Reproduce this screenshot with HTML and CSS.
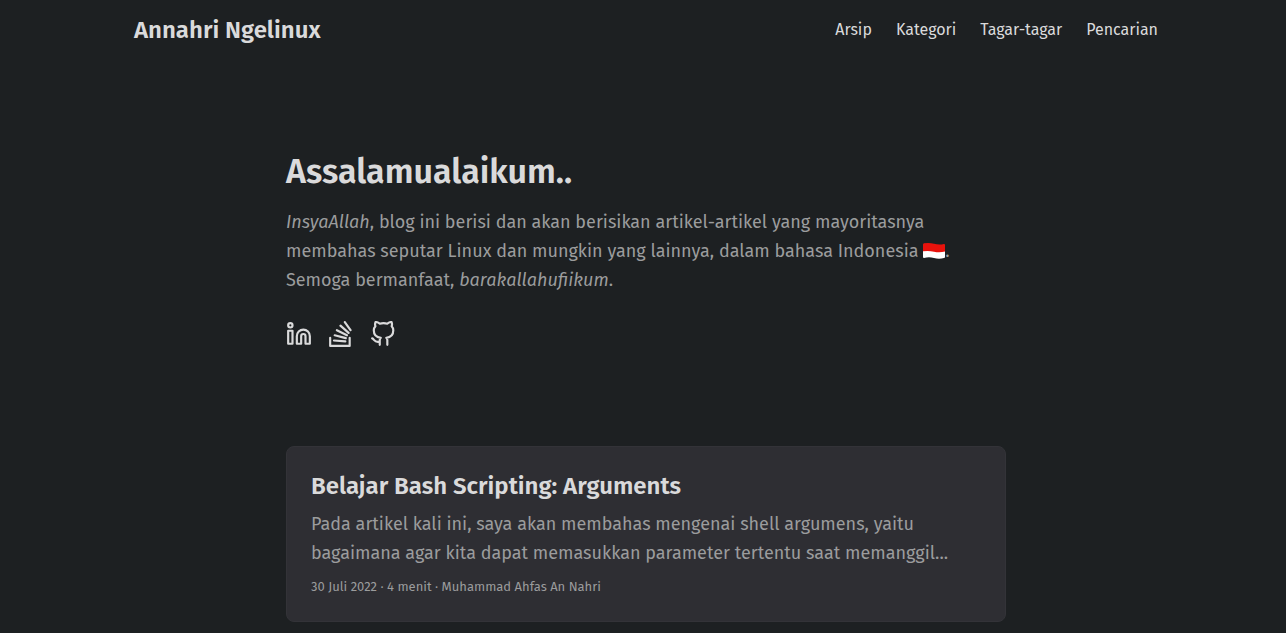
FILE: index.html
```html
<!DOCTYPE html>
<html lang="id">
<head>
<meta charset="utf-8">
<meta name="viewport" content="width=device-width, initial-scale=1">
<title>Annahri Ngelinux</title>
<link rel="stylesheet" href="styles.css">
</head>
<body>
<header class="header">
  <nav class="nav">
    <a class="logo" href="#">Annahri Ngelinux</a>
    <ul class="menu">
      <li><a href="#arsip">Arsip</a></li>
      <li><a href="#kategori">Kategori</a></li>
      <li><a href="#tagar">Tagar-tagar</a></li>
      <li><a href="#pencarian">Pencarian</a></li>
    </ul>
  </nav>
</header>
<main class="main">
  <section class="intro">
    <h1 class="intro-title">Assalamualaikum..</h1>
    <p class="intro-text"><em>InsyaAllah</em>, blog ini berisi dan akan berisikan artikel-artikel yang mayoritasnya<br>membahas seputar Linux dan mungkin yang lainnya, dalam bahasa Indonesia <svg class="flag" viewBox="0 0 22 18" role="img" aria-label="Bendera Indonesia"><path fill="#fff" d="M0 9h22v6q0 1-1 1-5 1.500-10 0-5-1.500-10 0-1 0-1-1z"/><path fill="#e8120c" d="M0 2.500q0-1 1-1.200 5-1 10 .4 5 1.300 10 .2 1 0 1 1V9.500q-5.500 1.500-11 .2Q5.500 8.300 0 9.300z"/></svg>.<br>Semoga bermanfaat, <em>barakallahufiikum</em>.</p>
    <div class="social">
      <a href="#linkedin" aria-label="LinkedIn"><svg class="icon" viewBox="0 0 24 24"><path d="M16 8a6 6 0 0 1 6 6v7h-4v-7a2 2 0 0 0-4 0v7h-4v-7a6 6 0 0 1 6-6z"/><rect x="2" y="9" width="4" height="12"/><circle cx="4" cy="4" r="2"/></svg></a>
      <a href="#stackoverflow" aria-label="Stack Overflow"><svg class="icon" viewBox="0 0 24 24"><path d="M2 15.500V23h18v-7.500M5.500 18l10.500.8M6.200 13.200l10.200 2.600M8.200 8.500l9.300 4.700M11.500 4.300l7.500 6.700M15.500 1l5.300 7.500"/></svg></a>
      <a href="#github" aria-label="GitHub"><svg class="icon" viewBox="0 0 24 24"><path d="M9 19c-5 1.500-5-2.500-7-3m14 6v-3.870a3.370 3.370 0 0 0-.94-2.610c3.140-.35 6.440-1.540 6.440-7A5.440 5.440 0 0 0 20 4.770 5.070 5.070 0 0 0 19.910 1S18.730.65 16 2.480a13.380 13.380 0 0 0-7 0C6.270.65 5.090 1 5.090 1A5.070 5.070 0 0 0 5 4.770a5.440 5.440 0 0 0-1.500 3.780c0 5.420 3.300 6.610 6.440 7A3.370 3.370 0 0 0 9 18.130V22"/></svg></a>
    </div>
  </section>
  <article class="card">
    <h2 class="card-title"><a href="#bash">Belajar Bash Scripting: Arguments</a></h2>
    <p class="card-text">Pada artikel kali ini, saya akan membahas mengenai shell argumens, yaitu<br>bagaimana agar kita dapat memasukkan parameter tertentu saat memanggil...</p>
    <footer class="card-meta">30 Juli 2022 · 4 menit · Muhammad Ahfas An Nahri</footer>
  </article>
</main>
</body>
</html>
```
FILE: styles.css
```css
* { box-sizing: border-box; margin: 0; padding: 0; }
body {
  background: #1d2022;
  color: #dadadb;
  font-family: "Fira Sans", "Noto Sans", sans-serif;
  font-size: 18px;
  line-height: 29px;
  padding-left: 6px;
}
a { color: inherit; text-decoration: none; }
.nav {
  display: flex;
  flex-wrap: wrap;
  justify-content: space-between;
  max-width: 1072px;
  margin: 0 auto;
  padding: 0 24px;
  line-height: 60px;
}
.logo { font-size: 24px; font-weight: 600; }
.menu { display: flex; gap: 24px; list-style: none; font-size: 16px; }
.main { max-width: 768px; margin: 0 auto; padding: 0 24px 24px; }
.intro {
  display: flex;
  flex-direction: column;
  justify-content: center;
  min-height: 320px;
  margin: 29px 0 37px;
}
.intro-title { font-size: 34px; line-height: 44px; font-weight: 600; }
.intro-text { margin: 14px 0 24px; color: #9b9c9d; }
.flag { width: 22px; height: 18px; vertical-align: -3px; }
.social { display: flex; gap: 16px; }
.social a { display: block; height: 30px; padding-top: 2px; }
.icon {
  display: block;
  width: 26px;
  height: 26px;
  fill: none;
  stroke: currentColor;
  stroke-width: 2;
  stroke-linecap: round;
  stroke-linejoin: round;
}
.card {
  padding: 24px;
  background: #2e2e33;
  border: 1px solid #333338;
  border-radius: 8px;
}
.card-title { font-size: 24px; line-height: 30px; font-weight: 600; }
.card-text { margin: 9px 0 8px; color: #9b9c9d; }
.card-meta { font-size: 13px; line-height: 21px; color: #9b9c9d; }
```
